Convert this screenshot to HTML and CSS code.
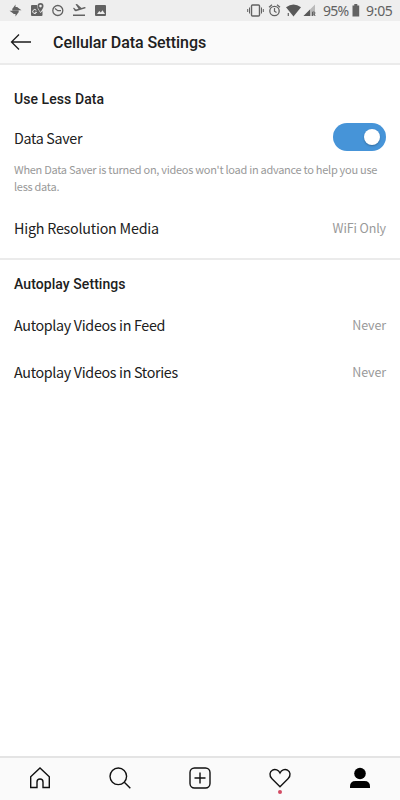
FILE: index.html
```html
<!DOCTYPE html>
<html lang="en">
<head>
<meta charset="utf-8">
<title>Cellular Data Settings</title>
<link rel="stylesheet" href="styles.css">
</head>
<body>
<div class="status">
  <svg class="status-left" width="120" height="21" viewBox="0 0 120 21">
    <g fill="#626262">
      <path d="M15.500 4.500v6h-3.200V8.700L13 8zM21.500 10.300h-6V7h1.800l.7.700zM15.500 16.500v-6h3.200v1.800l-.7.700zM9.500 10.700h6V14h-1.800l-.7-.7z"/>
      <path d="M32 5h5q0 4 3.500 8l2-2V15q0 1-1 1H32q-1 0-1-1V6q0-1 1-1z"/>
      <path fill-rule="evenodd" d="M40.500 3q3 0 3 3 0 2-3 6-3-4-3-6 0-3 3-3zm0 1.800a1.300 1.300 0 1 0 0 2.600 1.300 1.300 0 0 0 0-2.600z"/>
      <path d="M96 5h9q1 0 1 1v9q0 1-1 1h-9q-1 0-1-1V6q0-1 1-1z"/>
      <path d="M73 14.500h12V16H73zM73 8l1-.3 2 1.800 2.500-.7-3-4.500 1.500-.4 4.500 4 3-.8q1.500 0 1 1.200l-9.500 3-1.200-.2z"/>
    </g>
    <path d="M36.300 10.300a2 2 0 1 0 .3 2h-1.800" stroke="#eee" fill="none"/>
    <path d="M97 14l2.300-3 1.500 1.500 1.700-2.200L105 14z" fill="#eee"/>
    <circle cx="57.800" cy="10.500" r="5" fill="none" stroke="#626262" stroke-width="1.300"/>
    <path d="M55 8.500l2.800 2.200H61" fill="none" stroke="#626262" stroke-width="1.200"/>
  </svg>
  <div class="status-right">
    <svg width="77" height="21" viewBox="246 0 77 21">
      <g fill="none" stroke="#626262">
        <rect x="251.500" y="5" width="8" height="11" rx="1" stroke-width="1.400"/>
        <path d="M249.500 7.500v6M261.500 7.500v6M247.700 9v3M263.300 9v3"/>
        <circle cx="274.500" cy="11" r="4.700" stroke-width="1.300"/>
        <path d="M274.500 8v3.200l2 1.300M269 7.300l3-2.500M280 7.300l-3-2.500" stroke-width="1.200"/>
        <path d="M288.300 13v3" stroke-width="1.200"/>
      </g>
      <path d="M286 7.200q7.500-5.500 15 0L293.500 16.500z" fill="#585858"/>
      <path d="M315 4.500V16h-11.500z" fill="#b9b9b9"/>
      <path d="M310 9.500V16h-6.500z" fill="#585858"/>
      <path d="M312.500 16v-4h1.500q1 0 1 1t-1 1h-1.500M314 14l1.200 2" fill="none" stroke="#585858" stroke-width=".9"/>
    </svg>
    <span class="percent">95%</span>
    <svg class="battery" width="8" height="13" viewBox="0 0 8 13"><path d="M.5 1.500H2.300V0h3v1.500h1.900V12.500H.5z" fill="#626262"/></svg>
    <span class="clock">9:05</span>
  </div>
</div>
<header class="header">
  <svg width="22" height="18" viewBox="0 0 22 18" fill="none" stroke="#1c1c1c" stroke-width="1.300"><path d="M21 9H1.500M9 1.500L1.500 9 9 16.500"/></svg>
  <h1 class="title">Cellular Data Settings</h1>
</header>
<main class="content">
  <section class="section section-data">
    <h2 class="heading">Use Less Data</h2>
    <div class="row row-saver"><span class="label">Data Saver</span><span class="toggle"><span class="knob"></span></span></div>
    <p class="hint">When Data Saver is turned on, videos won't load in advance to help you use<br>less data.</p>
    <div class="row row-media"><span class="label media">High Resolution Media</span><span class="value">WiFi Only</span></div>
  </section>
  <section class="section section-autoplay">
    <h2 class="heading">Autoplay Settings</h2>
    <div class="row row-feed"><span class="label">Autoplay Videos in Feed</span><span class="value">Never</span></div>
    <div class="row"><span class="label">Autoplay Videos in Stories</span><span class="value">Never</span></div>
  </section>
</main>
<nav class="nav">
  <svg viewBox="0 0 24 24"><path d="M2.700 10.700L12 2l9.300 8.700v10.800H15v-5.500a3 3 0 0 0-6 0v5.500H2.700z"/></svg>
  <svg viewBox="0 0 24 24"><circle cx="10.300" cy="10.300" r="8.300"/><path d="M16.300 16.300l6 6"/></svg>
  <svg viewBox="0 0 24 24"><rect x="2" y="2" width="20" height="20" rx="4.500"/><path d="M12 6.500v11M6.500 12h11"/></svg>
  <span class="activity">
    <svg viewBox="0 0 24 24"><path d="M12 20.700L4 12.800C.8 9.600 1.700 5.500 4.500 4.100 7.400 2.600 10.500 4 12 7c1.500-3 4.600-4.400 7.500-2.900 2.800 1.400 3.700 5.500.5 8.700z"/></svg>
    <span class="dot"></span>
  </span>
  <svg class="profile" viewBox="0 0 24 24"><circle cx="12" cy="7.500" r="5.800"/><path d="M2 22v-1.500q0-5.500 5.500-5.500h9q5.500 0 5.500 5.500V22z"/></svg>
</nav>
</body>
</html>
```
FILE: styles.css
```css
* { box-sizing: border-box; }
body {
  margin: 0;
  height: 800px;
  display: flex;
  flex-direction: column;
  background: #fff;
  color: #202020;
  font-family: "Noto Sans CJK SC", "Noto Sans", sans-serif;
  overflow: hidden;
}
h1, h2, p { margin: 0; }
svg { display: block; flex: none; }
.status {
  height: 21px;
  display: flex;
  justify-content: space-between;
  background: #eee;
  color: #626262;
}
.status-right {
  width: 154px;
  display: flex;
  align-items: center;
  font: 14px/21px "Noto Sans", sans-serif;
}
.percent { width: 29px; letter-spacing: -.7px; }
.battery { margin-right: 6px; }
.clock { letter-spacing: -.3px; }
.header {
  height: 44px;
  display: flex;
  align-items: center;
  padding-left: 10px;
  gap: 21px;
  background: #fafafa;
  border-bottom: 2px solid #ebebeb;
}
.title {
  padding-top: 2px;
  font: 500 16px/22px Roboto, sans-serif;
  letter-spacing: -.07px;
}
.content { flex: 1; }
.section { padding: 0 14px; }
.section-data {
  height: 195px;
  padding-top: 24px;
  border-bottom: 2px solid #ebebeb;
}
.section-autoplay { padding-top: 14px; }
.heading { font: 500 14px/20px Roboto, sans-serif; letter-spacing: .07px; }
.row {
  height: 47px;
  display: flex;
  align-items: center;
  justify-content: space-between;
}
.row-saver { height: 56px; }
.row-media { margin-top: 9px; }
.row-feed { margin-top: 7px; }
.label {
  font-size: 14.3px;
  letter-spacing: -.32px;
  white-space: nowrap;
}
.media { letter-spacing: -.22px; }
.value { color: #999; font-size: 12.5px; letter-spacing: -.12px; }
.hint {
  margin-top: -4px;
  color: #999;
  font-size: 11px;
  line-height: 17px;
  letter-spacing: -.28px;
  white-space: nowrap;
}
.toggle {
  width: 53px;
  height: 28px;
  padding: 6px;
  display: flex;
  justify-content: flex-end;
  border-radius: 14px;
  background: #4694d8;
}
.knob {
  width: 16px;
  height: 16px;
  border-radius: 50%;
  background: #fff;
  box-shadow: 0 1px 2px #0004;
}
.nav {
  height: 44px;
  padding-bottom: 2px;
  display: grid;
  grid-template-columns: repeat(5, 1fr);
  justify-items: center;
  align-items: center;
  border-top: 2px solid #e4e4e4;
  background: #fafafa;
}
.nav svg {
  width: 24px;
  height: 24px;
  fill: none;
  stroke: #111;
  stroke-width: 1.4;
}
.nav .profile { fill: #000; stroke: none; }
.activity { position: relative; }
.dot {
  position: absolute;
  left: 10px;
  top: 24px;
  width: 4px;
  height: 4px;
  border-radius: 50%;
  background: #d24b63;
}
```
